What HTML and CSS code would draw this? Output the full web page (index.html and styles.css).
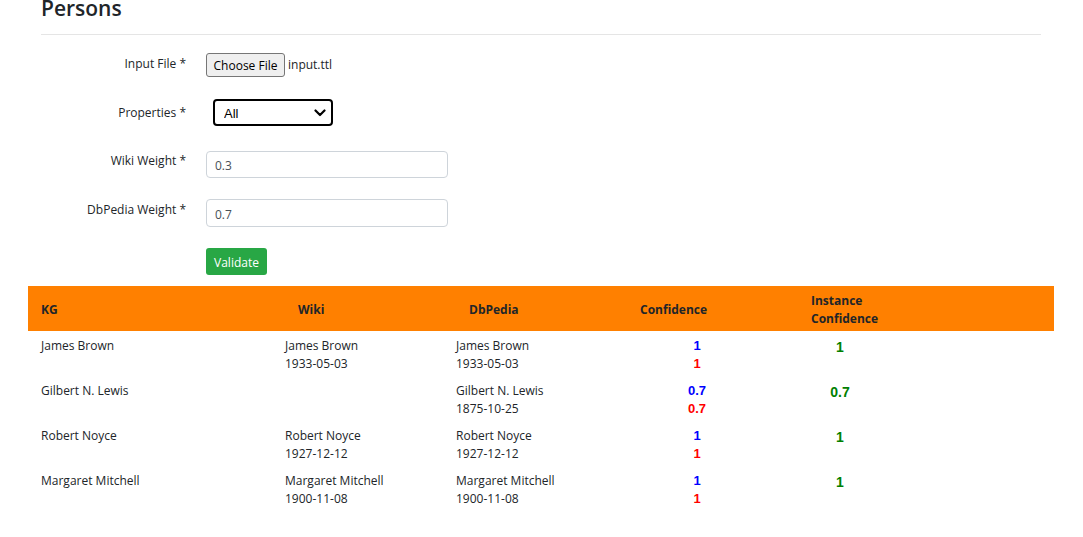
FILE: index.html
```html
<!DOCTYPE html>
<html lang="en">
<head>
<meta charset="utf-8">
<title>Persons</title>
<link rel="stylesheet" href="styles.css">
</head>
<body>
<div class="page">
  <div class="head">
    <h3 class="title">Persons</h3>
    <div class="rule"></div>
  </div>

  <form class="form">
    <div class="form-row row-file">
      <label class="label">Input File *</label>
      <div class="control file-control">
        <button type="button" class="file-btn">Choose File</button>
        <span class="file-name">input.ttl</span>
      </div>
    </div>
    <div class="form-row row-select">
      <label class="label">Properties *</label>
      <div class="control">
        <div class="select-wrap">
          <select class="select"><option>All</option></select>
          <svg class="chev" width="12" height="8" viewBox="0 0 12 8"><path d="M1.5 1.5 L6 6 L10.5 1.5" fill="none" stroke="#000" stroke-width="2.2" stroke-linecap="round" stroke-linejoin="round"/></svg>
        </div>
      </div>
    </div>
    <div class="form-row row-wiki">
      <label class="label">Wiki Weight *</label>
      <div class="control"><input class="text-input" type="text" value="0.3"></div>
    </div>
    <div class="form-row row-db">
      <label class="label">DbPedia Weight *</label>
      <div class="control"><input class="text-input tall" type="text" value="0.7"></div>
    </div>
    <div class="form-row row-btn">
      <span></span>
      <div class="control"><button type="button" class="validate">Validate</button></div>
    </div>
  </form>

  <table class="results">
    <colgroup>
      <col class="c-kg"><col class="c-wiki"><col class="c-db"><col class="c-conf"><col class="c-inst"><col class="c-rest">
    </colgroup>
    <thead>
      <tr>
        <th class="h-kg">KG</th>
        <th class="h-wiki">Wiki</th>
        <th class="h-db">DbPedia</th>
        <th class="h-conf">Confidence</th>
        <th class="h-inst">Instance<br>Confidence</th>
        <th></th>
      </tr>
    </thead>
    <tbody>
      <tr>
        <td>James Brown</td>
        <td>James Brown<br>1933-05-03</td>
        <td>James Brown<br>1933-05-03</td>
        <td class="conf"><span class="blue">1</span><br><span class="red">1</span></td>
        <td class="inst">1</td>
        <td></td>
      </tr>
      <tr>
        <td>Gilbert N. Lewis</td>
        <td></td>
        <td>Gilbert N. Lewis<br>1875-10-25</td>
        <td class="conf"><span class="blue">0.7</span><br><span class="red">0.7</span></td>
        <td class="inst">0.7</td>
        <td></td>
      </tr>
      <tr>
        <td>Robert Noyce</td>
        <td>Robert Noyce<br>1927-12-12</td>
        <td>Robert Noyce<br>1927-12-12</td>
        <td class="conf"><span class="blue">1</span><br><span class="red">1</span></td>
        <td class="inst">1</td>
        <td></td>
      </tr>
      <tr>
        <td>Margaret Mitchell</td>
        <td>Margaret Mitchell<br>1900-11-08</td>
        <td>Margaret Mitchell<br>1900-11-08</td>
        <td class="conf"><span class="blue">1</span><br><span class="red">1</span></td>
        <td class="inst">1</td>
        <td></td>
      </tr>
    </tbody>
  </table>
</div>
</body>
</html>
```

FILE: styles.css
```css
* { box-sizing: border-box; }

html, body {
  margin: 0;
  background: #fff;
}

body {
  font-family: "Open Sans", "Noto Sans", sans-serif;
  font-size: 12px;
  line-height: 18px;
  color: #212529;
  overflow: hidden;
}

.head {
  padding: 0 42px 0 41px;
}

.title {
  margin: -4px 0 0 0;
  font-size: 21px;
  line-height: 24px;
  font-weight: 600;
  color: #212529;
}

.rule {
  margin-top: 14px;
  border-top: 1px solid #e5e5e5;
}

.form {
  margin-top: 18px;
  padding-left: 41px;
}

.form-row {
  display: grid;
  grid-template-columns: 145px 1fr;
  column-gap: 20px;
  align-items: start;
}

.label {
  text-align: right;
  color: #212529;
}

.row-file { height: 24px; margin-bottom: 22px; }
.row-file .label { padding-top: 2px; }
.row-select { height: 27px; margin-bottom: 25px; }
.row-select .label { padding-top: 5px; }
.row-wiki { height: 27px; margin-bottom: 21px; }
.row-wiki .label { padding-top: 1px; }
.row-db { height: 28px; margin-bottom: 21px; }
.row-db .label { padding-top: 2px; }
.row-btn { height: 27px; margin-bottom: 11px; }

.file-control {
  display: flex;
  align-items: center;
  height: 24px;
}

.file-btn {
  height: 24px;
  width: 79px;
  padding: 0;
  font-family: "Open Sans", sans-serif;
  font-size: 12px;
  color: #000;
  background: #efefef;
  border: 1px solid #767676;
  border-radius: 3px;
}

.file-name {
  margin-left: 3px;
  font-size: 12px;
  color: #212529;
}

.select-wrap {
  position: relative;
  width: 120px;
  height: 27px;
  margin-left: 7px;
}

.select {
  appearance: none;
  -webkit-appearance: none;
  width: 120px;
  height: 27px;
  border: 2px solid #000;
  border-radius: 4px;
  background: #fff;
  padding: 2px 0 0 9px;
  font-family: "Liberation Sans", Arial, sans-serif;
  font-size: 13px;
  color: #000;
}

.chev {
  position: absolute;
  right: 7px;
  top: 10px;
  pointer-events: none;
}

.text-input {
  display: block;
  width: 242px;
  height: 27px;
  border: 1px solid #ced4da;
  border-radius: 4px;
  padding: 2px 8px 0 8px;
  font-family: "Open Sans", sans-serif;
  font-size: 12px;
  color: #495057;
  background: #fff;
}

.text-input.tall { height: 28px; }

.validate {
  height: 27px;
  width: 61px;
  padding: 1px 0 0 0;
  border: 0;
  border-radius: 3px;
  background: #28a745;
  color: #fff;
  font-family: "Open Sans", sans-serif;
  font-size: 12px;
}

.results {
  margin-left: 28px;
  width: 1026px;
  border-collapse: collapse;
  table-layout: fixed;
}

.c-kg { width: 244px; }
.c-wiki { width: 171px; }
.c-db { width: 171px; }
.c-conf { width: 166px; }
.c-inst { width: 120px; }
.c-rest { width: 154px; }

.results th {
  background: #ff8000;
  height: 45px;
  padding: 2px 0 0 0;
  text-align: left;
  vertical-align: middle;
  font-weight: 700;
  font-size: 12px;
  line-height: 18px;
  color: #212529;
}

.h-kg { padding-left: 13px !important; }
.h-wiki, .h-db, .h-conf { padding-left: 26px !important; }
.h-inst { padding-left: 31px !important; }

.results td {
  padding: 6px 13px 3px 13px;
  vertical-align: top;
  line-height: 18px;
  height: 45px;
}

.results td.conf {
  padding-left: 0;
  padding-right: 0;
  text-align: center;
  font-family: "Liberation Sans", Arial, sans-serif;
  font-weight: 700;
  font-size: 13px;
}

.results td.inst {
  padding-left: 0;
  padding-right: 0;
  text-align: center;
  font-family: "Liberation Sans", Arial, sans-serif;
  font-weight: 700;
  font-size: 14px;
  line-height: 20px;
  color: #008000;
}

.blue { color: #0000ff; }
.red { color: #ff0000; }
```
